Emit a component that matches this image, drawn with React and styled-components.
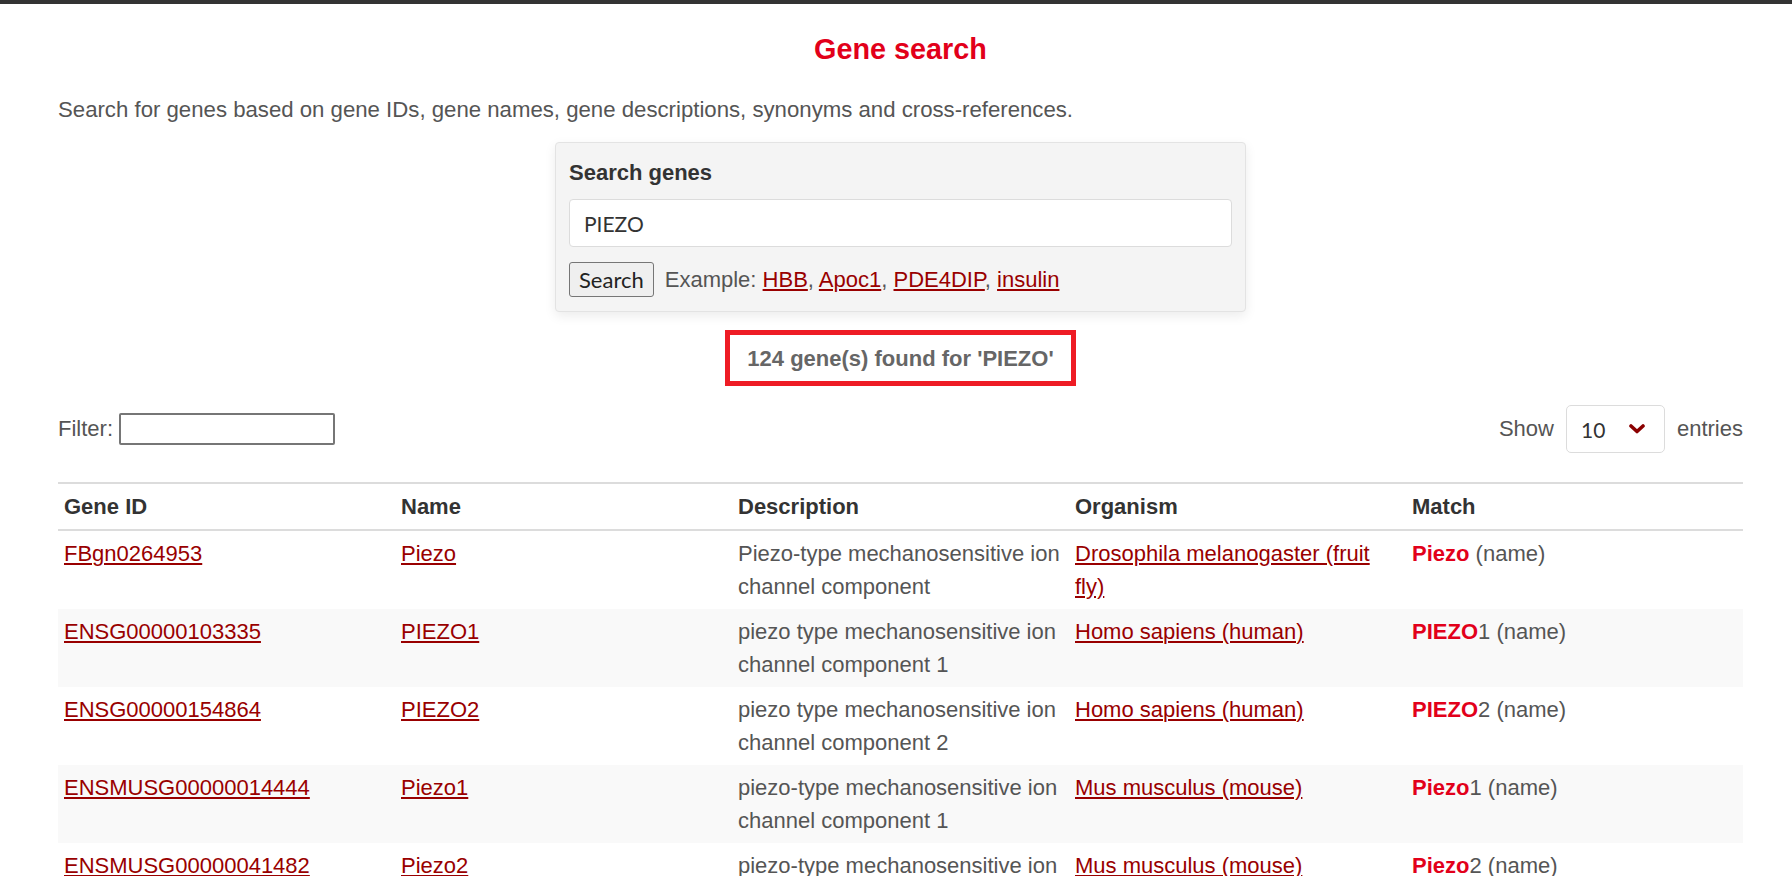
import React from "react";
import styled, { createGlobalStyle } from "styled-components";

const GlobalStyle = createGlobalStyle`
  html, body { margin: 0; padding: 0; background: #fff; overflow: hidden; }
  body {
    font-family: "Liberation Sans", Arial, sans-serif;
    font-size: 22px;
    color: #555;
  }
  * { box-sizing: border-box; }
`;

const TopBar = styled.div`
  height: 4px;
  background: #333;
`;

const Page = styled.main`
  padding: 0 49px 0 58px;
`;

const Title = styled.h1`
  margin: 28px 0 0;
  text-align: center;
  font-size: 28.8px;
  line-height: 34px;
  font-weight: bold;
  color: #e2001a;
`;

const Intro = styled.p`
  margin: 28px 0 0;
  line-height: 32px;
  font-size: 22.2px;
  color: #555;
`;

const SearchPanel = styled.form`
  width: 691px;
  margin: 16px auto 0;
  padding: 13px 13px 14px;
  background: #f4f4f4;
  border: 1px solid #e3e3e3;
  border-radius: 4px;
  box-shadow: 0 4px 12px rgba(0, 0, 0, 0.08);
  display: flex;
  flex-direction: column;
`;

const PanelLabel = styled.label`
  font-weight: bold;
  color: #333;
  line-height: 33px;
`;

const SearchInput = styled.input`
  margin-top: 10px;
  height: 48px;
  width: 100%;
  padding: 0 14px;
  border: 1px solid #dcdcdc;
  border-radius: 4px;
  background: #fff;
  font-family: Lato, "Liberation Sans", sans-serif;
  font-size: 21px;
  color: #333;
  outline: none;
`;

const ActionRow = styled.div`
  margin-top: 15px;
  display: flex;
  align-items: center;
  gap: 11px;
  height: 35px;
`;

const Button = styled.button`
  height: 35px;
  padding: 0 9px;
  border: 1px solid #767676;
  border-radius: 3px;
  background: #efefef;
  font-family: Lato, "Liberation Sans", sans-serif;
  font-size: 22px;
  color: #222;
`;

const Examples = styled.span`
  color: #555;
  line-height: 33px;
`;

const Link = styled.a`
  color: #990000;
  text-decoration: underline;
  text-decoration-thickness: 2px;
  text-underline-offset: 2px;
`;

const ResultBox = styled.div`
  margin: 18px auto 0;
  width: fit-content;
  border: 5px solid #ee1c25;
  padding: 6.5px 17px;
  line-height: 33px;
  font-weight: bold;
  color: #666;
`;

const Controls = styled.div`
  margin-top: 19px;
  display: flex;
  justify-content: space-between;
  align-items: center;
  height: 48px;
`;

const ControlGroup = styled.label`
  display: flex;
  align-items: center;
  gap: ${(p) => p.$gap || 6}px;
  color: #555;
`;

const FilterInput = styled.input`
  width: 216px;
  height: 32px;
  border: 2px solid #767676;
  border-radius: 2px;
  background: #fff;
  outline: none;
`;

const SelectWrap = styled.div`
  position: relative;
  width: 99px;
  height: 48px;
`;

const Select = styled.select`
  appearance: none;
  width: 100%;
  height: 100%;
  padding: 0 0 0 14px;
  border: 1px solid #dcdcdc;
  border-radius: 5px;
  background: #fff;
  font-family: Lato, "Liberation Sans", sans-serif;
  font-size: 21px;
  color: #333;
  outline: none;
`;

const Chevron = styled.svg`
  position: absolute;
  left: 63px;
  top: 19px;
  pointer-events: none;
`;

const Table = styled.table`
  margin-top: 29px;
  width: 100%;
  table-layout: fixed;
  border-collapse: separate;
  border-spacing: 0;
`;

const Th = styled.th`
  text-align: left;
  font-weight: bold;
  color: #333;
  line-height: 33px;
  padding: 5.8px 6px;
  border-top: 2px solid #dcdcdc;
  border-bottom: 2px solid #dcdcdc;
`;

const Tr = styled.tr`
  background: ${(p) => (p.$odd ? "#f9f9f9" : "#fff")};
`;

const Td = styled.td`
  vertical-align: top;
  line-height: 33px;
  padding: 6px;
  color: #555;
`;

const Hit = styled.strong`
  color: #e2001a;
`;

const rows = [
  {
    id: "FBgn0264953",
    name: "Piezo",
    desc: "Piezo-type mechanosensitive ion channel component",
    org: "Drosophila melanogaster (fruit fly)",
    hit: "Piezo",
    rest: "",
  },
  {
    id: "ENSG00000103335",
    name: "PIEZO1",
    desc: "piezo type mechanosensitive ion channel component 1",
    org: "Homo sapiens (human)",
    hit: "PIEZO",
    rest: "1",
  },
  {
    id: "ENSG00000154864",
    name: "PIEZO2",
    desc: "piezo type mechanosensitive ion channel component 2",
    org: "Homo sapiens (human)",
    hit: "PIEZO",
    rest: "2",
  },
  {
    id: "ENSMUSG00000014444",
    name: "Piezo1",
    desc: "piezo-type mechanosensitive ion channel component 1",
    org: "Mus musculus (mouse)",
    hit: "Piezo",
    rest: "1",
  },
  {
    id: "ENSMUSG00000041482",
    name: "Piezo2",
    desc: "piezo-type mechanosensitive ion channel component 2",
    org: "Mus musculus (mouse)",
    hit: "Piezo",
    rest: "2",
  },
];

export default function App() {
  return (
    <>
      <GlobalStyle />
      <TopBar />
      <Page>
        <Title>Gene search</Title>
        <Intro>
          Search for genes based on gene IDs, gene names, gene descriptions, synonyms and
          cross-references.
        </Intro>
        <SearchPanel onSubmit={(e) => e.preventDefault()}>
          <PanelLabel htmlFor="q">Search genes</PanelLabel>
          <SearchInput id="q" defaultValue="PIEZO" />
          <ActionRow>
            <Button type="submit">Search</Button>
            <Examples>
              Example: <Link href="#">HBB</Link>, <Link href="#">Apoc1</Link>,{" "}
              <Link href="#">PDE4DIP</Link>, <Link href="#">insulin</Link>
            </Examples>
          </ActionRow>
        </SearchPanel>
        <ResultBox>124 gene(s) found for 'PIEZO'</ResultBox>
        <Controls>
          <ControlGroup $gap={6}>
            Filter:
            <FilterInput />
          </ControlGroup>
          <ControlGroup $gap={12}>
            Show
            <SelectWrap>
              <Select defaultValue="10">
                <option>10</option>
                <option>25</option>
                <option>50</option>
                <option>100</option>
              </Select>
              <Chevron width="16" height="10" viewBox="0 0 16 10">
                <path
                  d="M2 2 L8 7.5 L14 2"
                  fill="none"
                  stroke="#8b0000"
                  strokeWidth="3.6"
                  strokeLinecap="round"
                  strokeLinejoin="round"
                />
              </Chevron>
            </SelectWrap>
            entries
          </ControlGroup>
        </Controls>
        <Table>
          <thead>
            <tr>
              <Th>Gene ID</Th>
              <Th>Name</Th>
              <Th>Description</Th>
              <Th>Organism</Th>
              <Th>Match</Th>
            </tr>
          </thead>
          <tbody>
            {rows.map((r, i) => (
              <Tr key={r.id} $odd={i % 2 === 1}>
                <Td>
                  <Link href="#">{r.id}</Link>
                </Td>
                <Td>
                  <Link href="#">{r.name}</Link>
                </Td>
                <Td>{r.desc}</Td>
                <Td>
                  <Link href="#">{r.org}</Link>
                </Td>
                <Td>
                  <Hit>{r.hit}</Hit>
                  {r.rest} (name)
                </Td>
              </Tr>
            ))}
          </tbody>
        </Table>
      </Page>
    </>
  );
}
